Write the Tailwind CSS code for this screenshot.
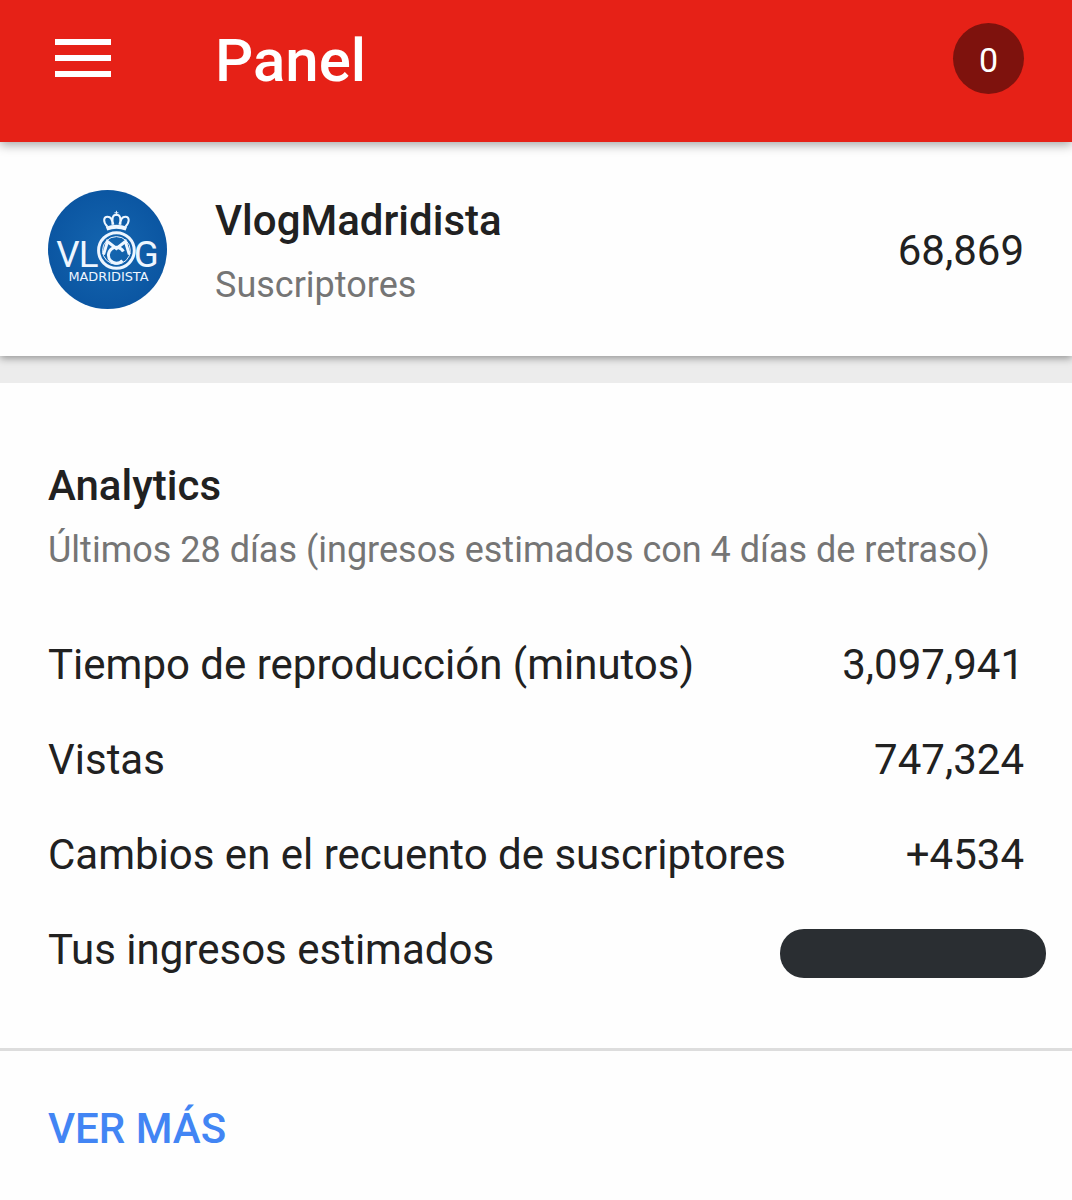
<!DOCTYPE html>
<html lang="es">
<head>
<meta charset="utf-8">
<meta name="viewport" content="width=device-width, initial-scale=1">
<title>Panel</title>
<script src="https://cdn.jsdelivr.net/npm/@tailwindcss/browser@4"></script>
</head>
<body class="min-h-screen bg-[#fefefe] font-['Roboto',sans-serif] text-[#212121]">
<header class="relative z-20 flex items-start bg-[#e62117] px-12 pt-[23px] pb-[43px] shadow-[0_3px_10px_rgba(0,0,0,0.35)]">
  <button type="button" aria-label="Menú" class="flex h-[70px] w-[167px] items-center pl-[7px]">
    <svg class="h-[38px] w-14" viewBox="0 0 56 38" fill="#fff" aria-hidden="true"><path d="M0 0h56v6H0zM0 16h56v6H0zM0 32h56v6H0z"/></svg>
  </button>
  <h1 class="flex-1 text-[60px] leading-[76px] font-medium text-white">Panel</h1>
  <button type="button" aria-label="0 notificaciones" class="size-[71px] rounded-full bg-[#7e120d] pt-0.5 text-[34px] leading-none text-white">0</button>
</header>
<main>
  <section class="relative z-10 flex items-center bg-[#fefefe] px-12 py-[41px] shadow-[0_2px_8px_rgba(0,0,0,0.4)]">
    <svg class="mr-12 size-[119px] shrink-0" viewBox="0 0 120 120" role="img" aria-label="Vlog Madridista">
      <defs><radialGradient id="blue"><stop offset="0" stop-color="#1566b0"/><stop offset="1" stop-color="#0b56a2"/></radialGradient></defs>
      <circle cx="60" cy="60" r="60" fill="url(#blue)"/>
      <g fill="#eef6ff" font-family="Roboto, sans-serif" font-size="37" text-anchor="middle">
        <text x="20" y="78">V</text><text x="41" y="78">L</text><text x="99" y="78">G</text>
      </g>
      <g fill="none" stroke="#eef6ff">
        <circle cx="69" cy="61" r="18" stroke-width="3"/>
        <circle cx="69" cy="61" r="14" stroke-width="1"/>
        <path d="M76 62a8 8 0 1 0-1 9" stroke-width="3"/>
        <path d="M56 65l4-13 9 7 9-7 4 13" stroke-width="3"/>
        <path d="M60 37c-5-5-4-10 0-10 3 0 5 3 5 8M78 37c5-5 4-10 0-10-3 0-5 3-5 8M66 35c-2-6-1-10 3-10s5 4 3 10" stroke-width="2"/>
        <path d="M59 39q10-4 20 0" stroke-width="4"/>
        <path d="M69 21v5M67 23h4" stroke-width="1"/>
      </g>
      <text x="61" y="92" fill="#eef6ff" font-family="DejaVu Sans, sans-serif" font-size="13" text-anchor="middle">MADRIDISTA</text>
    </svg>
    <div class="flex-1 pt-2">
      <h2 class="text-[42px] leading-[60px] font-medium">VlogMadridista</h2>
      <p class="pt-1 text-[36px] leading-[60px] text-[#757575]">Suscriptores</p>
    </div>
    <span class="pt-1 text-[42px] leading-[60px]">68,869</span>
  </section>
  <div class="h-[27px] bg-[#ececec]"></div>
  <section class="px-12 pt-[73px] pb-[51px]">
    <h2 class="text-[42px] leading-[60px] font-medium">Analytics</h2>
    <p class="pt-1 text-[36px] leading-[60px] text-[#757575]">Últimos 28 días (ingresos estimados con 4 días de retraso)</p>
    <dl class="pt-[37px] text-[42px] leading-[95px]">
      <div class="flex justify-between"><dt>Tiempo de reproducción (minutos)</dt><dd>3,097,941</dd></div>
      <div class="flex justify-between"><dt>Vistas</dt><dd>747,324</dd></div>
      <div class="flex justify-between"><dt>Cambios en el recuento de suscriptores</dt><dd>+4534</dd></div>
      <div class="flex items-center justify-between"><dt>Tus ingresos estimados</dt><dd class="mt-2 -mr-[22px] h-[49px] w-[266px] rounded-[24px] bg-[#2a2e32]" aria-label="Oculto"></dd></div>
    </dl>
  </section>
  <div class="border-t-3 border-[#dddddd] px-12 py-12">
    <a href="#analytics" class="text-[42px] leading-[60px] font-medium text-[#4285f4]">VER MÁS</a>
  </div>
</main>
</body>
</html>
